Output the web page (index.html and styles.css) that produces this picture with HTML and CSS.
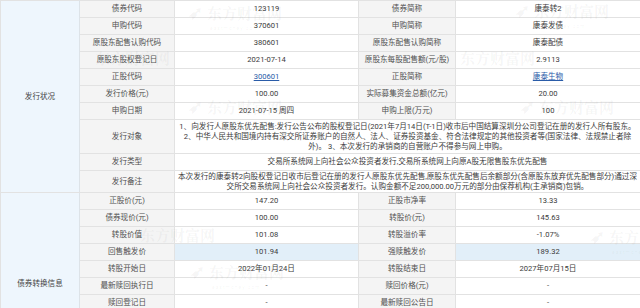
FILE: index.html
```html
<!DOCTYPE html>
<html lang="zh-CN">
<head>
<meta charset="utf-8">
<link rel="stylesheet" href="styles.css">
</head>
<body>
<div class="wrap">
<table class="info">
<colgroup>
<col class="c-sec"><col class="c-lab"><col class="c-val"><col class="c-lab2"><col class="c-val2">
</colgroup>
<tbody>
<tr>
<td class="sec" rowspan="10">发行状况</td>
<td class="lab">债券代码</td><td>123119</td><td class="lab">债券简称</td><td>康泰转2</td>
</tr>
<tr><td class="lab">申购代码</td><td>370601</td><td class="lab">申购简称</td><td>康泰发债</td></tr>
<tr><td class="lab">原股东配售认购代码</td><td>380601</td><td class="lab">原股东配售认购简称</td><td>康泰配债</td></tr>
<tr><td class="lab">原股东股权登记日</td><td>2021-07-14</td><td class="lab">原股东每股配售额(元/股)</td><td>2.9113</td></tr>
<tr><td class="lab">正股代码</td><td><a href="#">300601</a></td><td class="lab">正股简称</td><td><a href="#">康泰生物</a></td></tr>
<tr><td class="lab">发行价格(元)</td><td>100.00</td><td class="lab">实际募集资金总额(亿元)</td><td>20.00</td></tr>
<tr><td class="lab">申购日期</td><td>2021-07-15 周四</td><td class="lab">申购上限(万元)</td><td>100</td></tr>
<tr class="multi"><td class="lab">发行对象</td><td colspan="3" class="long tall">1、向发行人原股东优先配售:发行公告公布的股权登记日(2021年7月14日(T-1日)收市后中国结算深圳分公司登记在册的发行人所有股东。<br>2、中华人民共和国境内持有深交所证券账户的自然人、法人、证券投资基金、符合法律规定的其他投资者等(国家法律、法规禁止者除<br>外)。 3、本次发行的承销商的自营账户不得参与网上申购。</td></tr>
<tr><td class="lab">发行类型</td><td colspan="3" class="long">交易所系统网上向社会公众投资者发行,交易所系统网上向原A股无限售股东优先配售</td></tr>
<tr class="multi"><td class="lab">发行备注</td><td colspan="3" class="long">本次发行的康泰转2向股权登记日收市后登记在册的发行人原股东优先配售,原股东优先配售后余额部分(含原股东放弃优先配售部分)通过深<br>交所交易系统网上向社会公众投资者发行。认购金额不足200,000.00万元的部分由保荐机构(主承销商)包销。</td></tr>
<tr>
<td class="sec" rowspan="11">债券转换信息</td>
<td class="lab">正股价(元)</td><td>147.20</td><td class="lab">正股市净率</td><td>13.33</td>
</tr>
<tr><td class="lab">债券现价(元)</td><td>100.00</td><td class="lab">转股价(元)</td><td>145.63</td></tr>
<tr><td class="lab">转股价值</td><td>101.08</td><td class="lab">转股溢价率</td><td>-1.07%</td></tr>
<tr><td class="lab">回售触发价</td><td class="hl">101.94</td><td class="lab">强赎触发价</td><td class="hl">189.32</td></tr>
<tr><td class="lab">转股开始日</td><td>2022年01月24日</td><td class="lab">转股结束日</td><td>2027年07月15日</td></tr>
<tr><td class="lab">最新赎回执行日</td><td>-</td><td class="lab">赎回价格(元)</td><td>-</td></tr>
<tr><td class="lab">赎回登记日</td><td>-</td><td class="lab">最新赎回公告日</td><td>-</td></tr>
<tr><td class="lab">赎回原因</td><td>-</td><td class="lab">赎回类型</td><td>-</td></tr>
<tr><td class="lab">最新回售执行日</td><td>-</td><td class="lab">回售价格(元)</td><td>-</td></tr>
<tr><td class="lab">回售原因</td><td>-</td><td class="lab">最新回售公告日</td><td>-</td></tr>
<tr class="last"><td class="lab">回售类型</td><td>-</td><td class="lab">利率说明</td><td>-</td></tr>
</tbody>
</table>
<div class="wm wm1"><span class="wm-logo">➶</span>东方财富网<small>eastmoney.com</small></div>
<div class="wm wm2"><span class="wm-logo">➶</span>东方财富网<small>eastmoney.com</small></div>
<div class="wm wm3">东方财富网</div>
<div class="wm wm4">东方财富网</div>
<div class="wm wm5"><span class="wm-logo">➶</span>东方财富网<small>eastmoney.com</small></div>
<div class="wm wm6"><span class="wm-logo">➶</span>东方财富网<small>eastmoney.com</small></div>
<div class="wm wm7">东方财富网</div>
<div class="wm wm8"><span class="wm-logo">➶</span>东方财富网<small>eastmoney.com</small></div>
<div class="wm wm9"><span class="wm-logo">➶</span>东方财富网<small>eastmoney.com</small></div>
</div>
</body>
</html>
```

FILE: styles.css
```css
html, body {
  margin: 0;
  padding: 0;
  background: #ffffff;
}
.wrap {
  position: relative;
  width: 640px;
  overflow: hidden;
}
.info {
  width: 640px;
  border-collapse: collapse;
  table-layout: fixed;
  font-family: Roboto, "Noto Sans CJK SC", sans-serif;
  font-size: 7.6px;
  line-height: 10px;
  color: #3c3c3c;
  border-left: 1px solid #a9b7c4;
}
.c-sec { width: 79px; }
.c-lab { width: 95px; }
.c-val { width: 184px; }
.c-lab2 { width: 97px; }
.c-val2 { width: 185px; }
.info td {
  border: 1px solid #e2e2e2;
  text-align: center;
  vertical-align: middle;
  height: 16px;
  padding: 0 2px;
  background: #fff;
}
.info td.sec {
  background: #eef6fd;
  border-right: 1px solid #dde3e8;
  color: #444;
}
.info td.lab {
  background: #f4f4f4;
  color: #505050;
}
.info td.hl {
  background: #e2eff9;
}
.info td.long {
  padding: 0 1px;
}
.info tr.multi td.long {
  padding: 1px 1px 0;
}
.info tr.multi td.long.tall {
  padding: 2px 1px 1px;
}
.info tr.last td {
  height: 11px;
}
.info a {
  color: #2a5ca8;
  text-decoration: underline;
}
.wm {
  position: absolute;
  font-family: "Noto Serif CJK SC", "Noto Sans CJK SC", serif;
  font-weight: bold;
  font-size: 15px;
  line-height: 16px;
  color: rgba(120, 120, 120, 0.07);
  white-space: nowrap;
  pointer-events: none;
}
.wm small {
  position: absolute;
  left: 22px;
  top: 17px;
  font-family: Roboto, sans-serif;
  font-weight: normal;
  font-size: 5px;
  letter-spacing: 1px;
}
.wm-logo {
  display: inline-block;
  font-size: 18px;
  margin-right: 4px;
}
.wm1 { left: 188px; top: 3px; }
.wm2 { left: 515px; top: 1px; }
.wm3 { left: 95px; top: 50px; }
.wm4 { left: 460px; top: 50px; }
.wm5 { left: 188px; top: 97px; }
.wm6 { left: 520px; top: 97px; }
.wm7 { left: 140px; top: 227px; }
.wm8 { left: 190px; top: 262px; }
.wm9 { left: 590px; top: 227px; }
```
